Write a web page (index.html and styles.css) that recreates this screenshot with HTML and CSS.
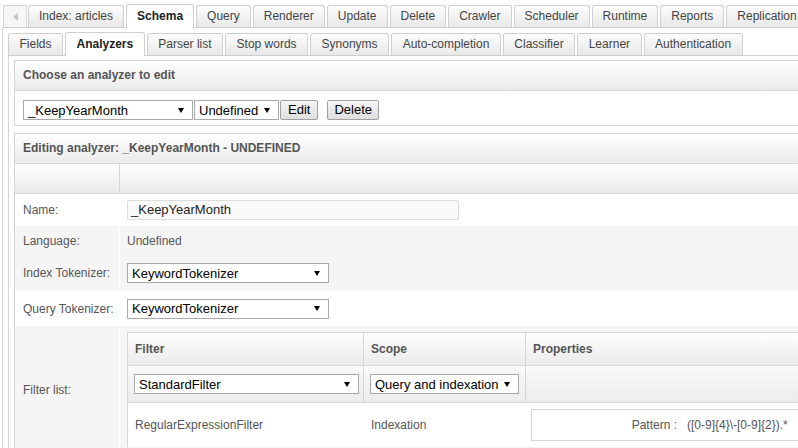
FILE: index.html
```html
<!DOCTYPE html>
<html>
<head>
<meta charset="utf-8">
<link rel="stylesheet" href="styles.css">
</head>
<body>
<div class="page">
  <div class="tabbar top">
    <div class="scroll"><svg width="5" height="8" viewBox="0 0 5 8"><polygon points="5,0 5,8 0,4" fill="#c4c4c4"/></svg></div>
    <div class="tab">Index: articles</div>
    <div class="tab active">Schema</div>
    <div class="tab">Query</div>
    <div class="tab">Renderer</div>
    <div class="tab">Update</div>
    <div class="tab">Delete</div>
    <div class="tab">Crawler</div>
    <div class="tab">Scheduler</div>
    <div class="tab">Runtime</div>
    <div class="tab">Reports</div>
    <div class="tab">Replication</div>
  </div>
  <div class="outer">
    <div class="tabbar sub">
      <div class="tab">Fields</div>
      <div class="tab active">Analyzers</div>
      <div class="tab">Parser list</div>
      <div class="tab">Stop words</div>
      <div class="tab">Synonyms</div>
      <div class="tab">Auto-completion</div>
      <div class="tab">Classifier</div>
      <div class="tab">Learner</div>
      <div class="tab">Authentication</div>
    </div>
    <div class="inner">
      <div class="panel">
        <div class="panel-head">Choose an analyzer to edit</div>
        <div class="panel-body controls">
          <div class="select sel-analyzer"><span>_KeepYearMonth</span><svg class="arrow" width="6" height="5" viewBox="0 0 6 5"><polygon points="0,0 6,0 3,5" fill="#000"/></svg></div>
          <div class="select sel-lang"><span>Undefined</span><svg class="arrow" width="6" height="5" viewBox="0 0 6 5"><polygon points="0,0 6,0 3,5" fill="#000"/></svg></div>
          <div class="btn">Edit</div>
          <div class="btn btn-gap">Delete</div>
        </div>
      </div>

      <div class="panel panel-edit">
        <div class="panel-head">Editing analyzer: _KeepYearMonth - UNDEFINED</div>
        <div class="form">
          <div class="frow r-head">
            <div class="lab"></div>
            <div class="val"></div>
          </div>
          <div class="frow r-name">
            <div class="lab">Name:</div>
            <div class="val"><div class="input">_KeepYearMonth</div></div>
          </div>
          <div class="frow r-lang grey">
            <div class="lab">Language:</div>
            <div class="val">Undefined</div>
          </div>
          <div class="frow r-itok grey">
            <div class="lab">Index Tokenizer:</div>
            <div class="val"><div class="select sel-tok"><span>KeywordTokenizer</span><svg class="arrow" width="6" height="5" viewBox="0 0 6 5"><polygon points="0,0 6,0 3,5" fill="#000"/></svg></div></div>
          </div>
          <div class="frow r-qtok">
            <div class="lab">Query Tokenizer:</div>
            <div class="val"><div class="select sel-tok"><span>KeywordTokenizer</span><svg class="arrow" width="6" height="5" viewBox="0 0 6 5"><polygon points="0,0 6,0 3,5" fill="#000"/></svg></div></div>
          </div>
          <div class="frow r-filter grey">
            <div class="lab">Filter list:</div>
            <div class="val val-filter">
              <div class="ftable">
                <div class="fh">Filter</div>
                <div class="fh">Scope</div>
                <div class="fh">Properties</div>
                <div class="fs"><div class="select sel-filter"><span>StandardFilter</span><svg class="arrow" width="6" height="5" viewBox="0 0 6 5"><polygon points="0,0 6,0 3,5" fill="#000"/></svg></div></div>
                <div class="fs"><div class="select sel-scope"><span>Query and indexation</span><svg class="arrow" width="6" height="5" viewBox="0 0 6 5"><polygon points="0,0 6,0 3,5" fill="#000"/></svg></div></div>
                <div class="fs"></div>
                <div class="fd">RegularExpressionFilter</div>
                <div class="fd">Indexation</div>
                <div class="fd fd-props">
                  <div class="props">
                    <span class="pkey">Pattern :</span>
                    <span class="pval">([0-9]{4}\-[0-9]{2}).*</span>
                  </div>
                </div>
              </div>
            </div>
          </div>
        </div>
      </div>
    </div>
  </div>
</div>
</body>
</html>
```

FILE: styles.css
```css
html, body {
  margin: 0;
  padding: 0;
  overflow: hidden;
  background: #fff;
}
body {
  font-family: "Liberation Sans", Arial, sans-serif;
  font-size: 12px;
  color: #555;
}
.page {
  width: 1100px;
}

/* tab bars */
.tabbar {
  display: flex;
  align-items: flex-end;
  height: 27px;
  gap: 2px;
  position: relative;
  z-index: 1;
}
.tabbar.top {
  padding-left: 3px;
}
.scroll {
  width: 22px;
  height: 21px;
  border: 1px solid #d6d6d6;
  border-bottom: none;
  background: #f6f6f6;
  display: flex;
  align-items: center;
  justify-content: center;
  margin-right: -1px;
}
.tab {
  height: 21px;
  line-height: 21px;
  padding: 0 10px;
  border: 1px solid #cfcfcf;
  border-bottom: none;
  border-radius: 3px 3px 0 0;
  background: linear-gradient(#fdfdfd, #e8e8e8);
  color: #444;
  white-space: nowrap;
}
.tabbar.sub .tab {
  padding: 0 10.5px;
}
.tab.active {
  height: 23px;
  line-height: 23px;
  margin-bottom: -1px;
  background: #fff;
  font-weight: bold;
  color: #222;
}

.outer {
  margin-left: 2px;
  border-top: 1px solid #cfcfcf;
  border-left: 1px solid #d6d6d6;
  padding-left: 5px;
}
.inner {
  border-top: 1px solid #cfcfcf;
  border-left: 1px solid #d6d6d6;
  padding: 4px 0 0 5px;
}

/* panels */
.panel {
  border: 1px solid #d6d6d6;
  background: #fff;
}
.panel-edit {
  margin-top: 7px;
}
.panel-head {
  height: 29px;
  line-height: 29px;
  padding-left: 8px;
  border-bottom: 1px solid #d6d6d6;
  background: linear-gradient(#fefefe, #ebebeb);
  font-weight: bold;
  color: #555;
}
.panel-body {
  padding: 9px 8px 5px 8px;
}
.controls {
  display: flex;
  align-items: center;
  gap: 1px;
}

/* selects & buttons */
.select {
  box-sizing: border-box;
  height: 20px;
  display: flex;
  align-items: center;
  justify-content: space-between;
  padding: 0 8px 0 4px;
  border: 1px solid #a9a9a9;
  background: #fff;
  font-size: 13px;
  color: #000;
  white-space: nowrap;
}
.arrow {
  flex: none;
}
.sel-analyzer { width: 170px; }
.sel-lang { width: 85px; }
.sel-tok { width: 202px; }
.sel-filter { width: 225px; }
.sel-scope { width: 149px; }

.btn {
  box-sizing: border-box;
  height: 20px;
  line-height: 18px;
  padding: 0 7px;
  border: 1px solid #a0a0a0;
  border-radius: 2px;
  background: linear-gradient(#f6f6f6, #dedede);
  font-size: 13px;
  color: #000;
}
.btn-gap {
  margin-left: 8px;
  padding: 0 6px;
}

/* form */
.frow {
  display: flex;
}
.lab {
  box-sizing: border-box;
  width: 105px;
  flex: none;
  padding-left: 8px;
  border-right: 1px solid #fff;
  display: flex;
  align-items: center;
  color: #555;
}
.val {
  flex: 1;
  padding-left: 7px;
  display: flex;
  align-items: center;
  color: #555;
}
.r-head {
  height: 29px;
  border-bottom: 1px solid #d6d6d6;
  background: linear-gradient(#fefefe, #ebebeb);
}
.r-head .lab {
  border-right-color: #d6d6d6;
}
.r-name { height: 32px; }
.r-lang { height: 29px; }
.r-itok { height: 36px; }
.r-qtok { height: 35px; }
.grey { background: #f5f5f5; }

.input {
  box-sizing: border-box;
  width: 332px;
  height: 20px;
  line-height: 18px;
  padding-left: 3px;
  border: 1px solid #dcdcdc;
  border-radius: 2px;
  background: #fafafa;
  font-size: 13px;
  color: #222;
}

.val-filter {
  padding-top: 6px;
  padding-bottom: 6px;
}
.ftable {
  flex: 1;
  display: grid;
  grid-template-columns: 236px 162px 1fr;
  grid-template-rows: 33px 37px 44px;
  border-top: 1px solid #d6d6d6;
  border-left: 1px solid #d6d6d6;
  background: #fff;
}
.fh, .fs {
  border-right: 1px solid #d6d6d6;
  border-bottom: 1px solid #d6d6d6;
  display: flex;
  align-items: center;
}
.fh {
  padding-left: 7px;
  background: linear-gradient(#fefefe, #ebebeb);
  font-weight: bold;
  color: #555;
}
.fs {
  padding-left: 6px;
  background: linear-gradient(#f9f9f9, #ececec);
}
.fd {
  padding-left: 7px;
  display: flex;
  align-items: center;
  color: #555;
}
.fd-props {
  padding-left: 5px;
}
.props {
  box-sizing: border-box;
  flex: 1;
  height: 32px;
  display: flex;
  align-items: center;
  border: 1px solid #d6d6d6;
  background: #fff;
}
.pkey {
  width: 145px;
  text-align: right;
  color: #555;
}
.pval {
  margin-left: 10px;
  color: #555;
}
```
